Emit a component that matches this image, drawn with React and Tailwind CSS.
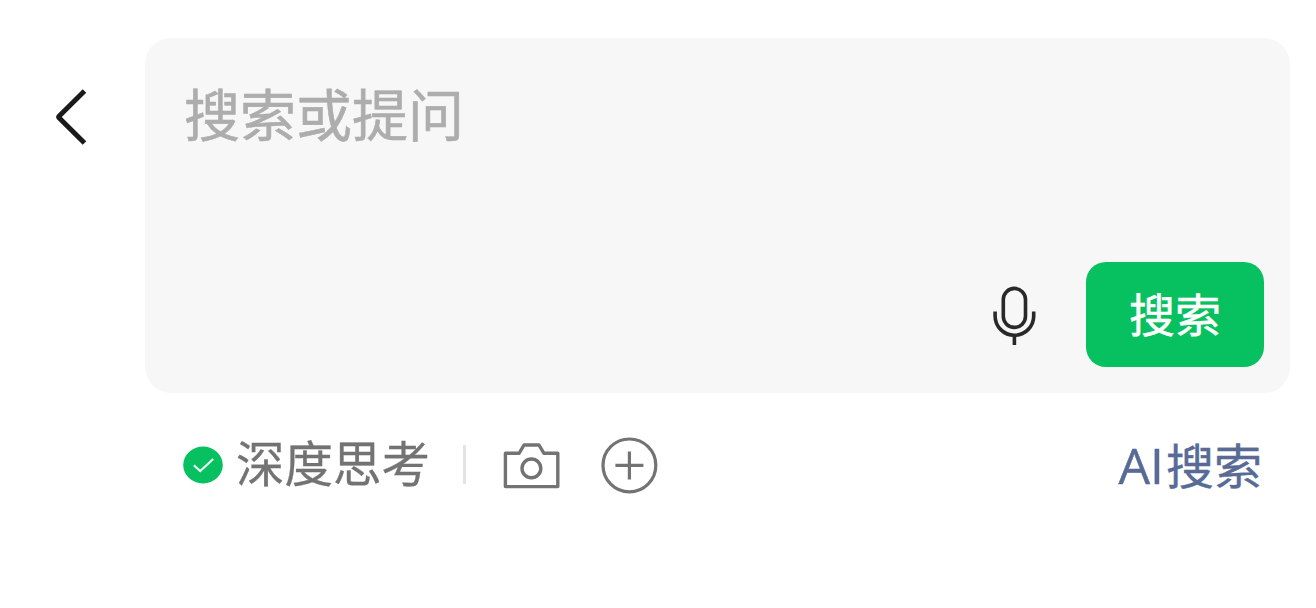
import React from 'react';

const BackIcon = () => (
    <svg width="32" height="58" viewBox="0 0 32 58" fill="none" stroke="#1a1a1a" strokeWidth="5">
        <path d="M29.5 3 L4 28.2 Q3.2 29 4 29.8 L29.5 55" />
    </svg>
);

const MicIcon = () => (
    <svg width="44" height="60" viewBox="0 0 44 60" fill="none" stroke="#292929" strokeWidth="3.6">
        <rect x="11.3" y="2.4" width="22.2" height="39" rx="11.1" />
        <path d="M3.1 25.5 V30 A19.3 19.3 0 0 0 41.7 30 V25.5" />
        <path d="M22.4 49 V59" />
    </svg>
);

const CheckBadge = () => (
    <svg width="40" height="38" viewBox="0 0 40 38" fill="none">
        <ellipse cx="20" cy="19" rx="19.8" ry="18.4" fill="#07c160" />
        <path d="M10.8 19.3 L17.2 25 L30.2 13" stroke="#e8fff2" strokeWidth="2.2" />
    </svg>
);

const CameraIcon = () => (
    <svg width="58" height="48" viewBox="0 0 58 48" fill="none" stroke="#737373" strokeWidth="3.4" strokeLinejoin="round">
        <path d="M3.4 12.2 H17.2 L22 4 H37 L41.8 12.2 H55.8 V45.6 H3.4 Z" />
        <circle cx="29.4" cy="27.4" r="9.4" />
    </svg>
);

const PlusCircleIcon = () => (
    <svg width="58" height="58" viewBox="0 0 58 58" fill="none" stroke="#737373" strokeWidth="3.2">
        <circle cx="29.4" cy="29.4" r="26.4" />
        <path d="M15.4 29.4 H43.4 M29.4 15.4 V43.4" />
    </svg>
);

const SearchBox = () => (
    <div className="w-[1145px] h-[355px] rounded-[26px] bg-[#f7f7f7] flex flex-col justify-between pl-[39px] pr-[26px] pt-[34px] pb-[26px]">
        <div className="text-[56px] leading-[80px] text-[#adadad] [-webkit-text-stroke:0.6px]">搜索或提问</div>
        <div className="flex items-center justify-end">
            <button className="mr-[50px] mt-0.5" aria-label="语音">
                <MicIcon />
            </button>
            <button className="w-[178px] h-[105px] rounded-[20px] bg-[#07c160] text-white text-[46px] leading-[101px] pb-1 [-webkit-text-stroke:0.5px]">
                搜索
            </button>
        </div>
    </div>
);

const Toolbar = () => (
    <div className="h-[76px] mt-[34px] pl-[183px] pr-[54px] flex items-center">
        <CheckBadge />
        <span className="ml-[13px] pb-2 w-[194px] text-[48.5px] leading-[76px] text-[#737373] whitespace-nowrap [-webkit-text-stroke:0.3px]">深度思考</span>
        <div className="ml-[33px] mb-0.5 w-[3px] h-[39px] bg-[#e3e3e3]"></div>
        <button className="ml-9" aria-label="拍照">
            <CameraIcon />
        </button>
        <button className="ml-10" aria-label="更多">
            <PlusCircleIcon />
        </button>
        <span className="ml-auto pb-1 text-[48px] leading-[76px] text-[#576b95] whitespace-nowrap [-webkit-text-stroke:0.4px]">
            <span className="font-['Open_Sans',sans-serif] text-[50px] leading-none mr-0.5">AI</span>搜索
        </span>
    </div>
);

const App = () => {
    return (
        <div className="w-[1316px] h-[608px] bg-white overflow-hidden font-['Noto_Sans_CJK_SC',sans-serif]">
            <div className="flex items-start pt-[38px]">
                <button className="w-[145px] pl-[55px] pt-[50px]" aria-label="返回">
                    <BackIcon />
                </button>
                <SearchBox />
            </div>
            <Toolbar />
        </div>
    );
};

export default App;
